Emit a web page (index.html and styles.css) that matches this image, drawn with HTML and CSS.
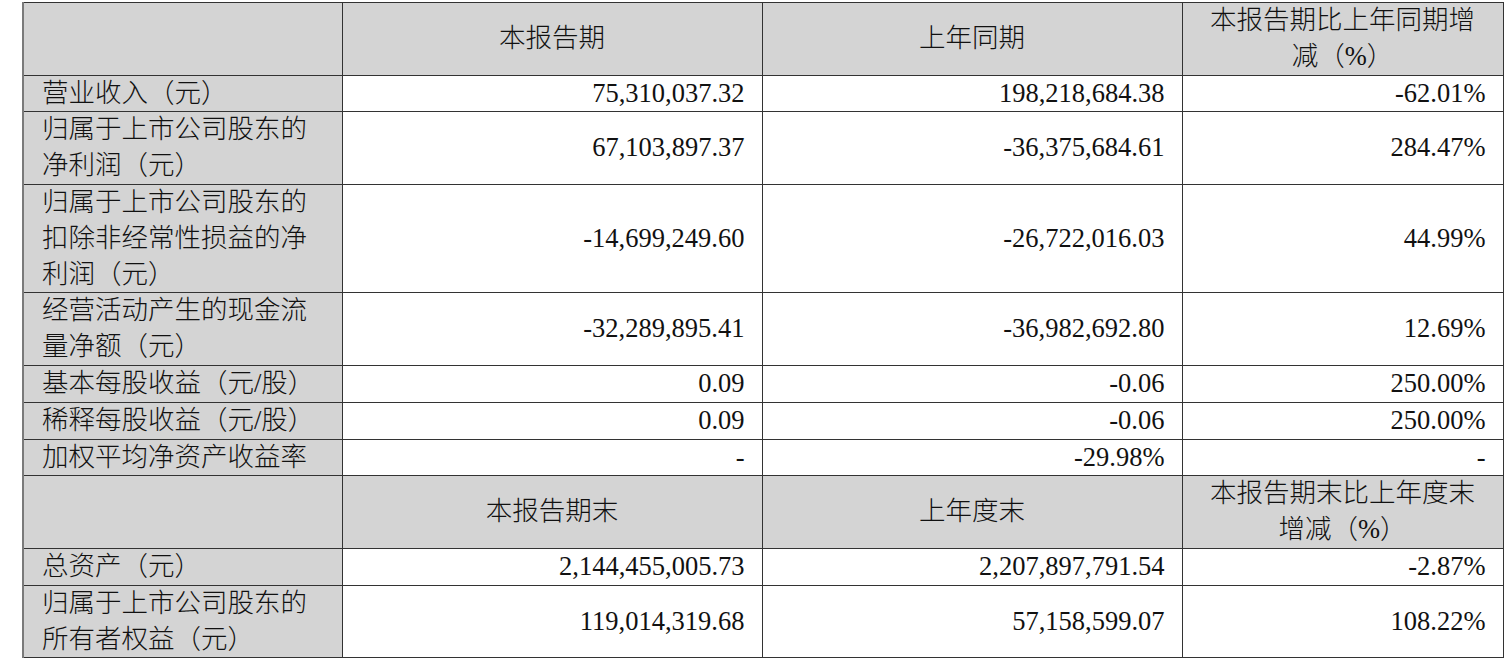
FILE: index.html
```html
<!DOCTYPE html>
<html lang="zh-CN">
<head>
<meta charset="utf-8">
<title>主要会计数据和财务指标</title>
<link rel="stylesheet" href="styles.css">
</head>
<body>
<table class="fin">
  <colgroup>
    <col class="c-label">
    <col class="c-num">
    <col class="c-num">
    <col class="c-pct">
  </colgroup>
  <tbody>
    <tr class="head">
      <td class="label"></td>
      <td>本报告期</td>
      <td>上年同期</td>
      <td>本报告期比上年同期增减（%）</td>
    </tr>
    <tr>
      <td class="label">营业收入（元）</td>
      <td class="num">75,310,037.32</td>
      <td class="num">198,218,684.38</td>
      <td class="num">-62.01%</td>
    </tr>
    <tr>
      <td class="label">归属于上市公司股东的净利润（元）</td>
      <td class="num">67,103,897.37</td>
      <td class="num">-36,375,684.61</td>
      <td class="num">284.47%</td>
    </tr>
    <tr>
      <td class="label">归属于上市公司股东的扣除非经常性损益的净利润（元）</td>
      <td class="num">-14,699,249.60</td>
      <td class="num">-26,722,016.03</td>
      <td class="num">44.99%</td>
    </tr>
    <tr>
      <td class="label">经营活动产生的现金流量净额（元）</td>
      <td class="num">-32,289,895.41</td>
      <td class="num">-36,982,692.80</td>
      <td class="num">12.69%</td>
    </tr>
    <tr>
      <td class="label">基本每股收益（元/股）</td>
      <td class="num">0.09</td>
      <td class="num">-0.06</td>
      <td class="num">250.00%</td>
    </tr>
    <tr>
      <td class="label">稀释每股收益（元/股）</td>
      <td class="num">0.09</td>
      <td class="num">-0.06</td>
      <td class="num">250.00%</td>
    </tr>
    <tr>
      <td class="label">加权平均净资产收益率</td>
      <td class="num">-</td>
      <td class="num">-29.98%</td>
      <td class="num">-</td>
    </tr>
    <tr class="head">
      <td class="label"></td>
      <td>本报告期末</td>
      <td>上年度末</td>
      <td>本报告期末比上年度末增减（%）</td>
    </tr>
    <tr>
      <td class="label">总资产（元）</td>
      <td class="num">2,144,455,005.73</td>
      <td class="num">2,207,897,791.54</td>
      <td class="num">-2.87%</td>
    </tr>
    <tr>
      <td class="label">归属于上市公司股东的所有者权益（元）</td>
      <td class="num">119,014,319.68</td>
      <td class="num">57,158,599.07</td>
      <td class="num">108.22%</td>
    </tr>
  </tbody>
</table>
</body>
</html>
```

FILE: styles.css
```css
html, body {
  margin: 0;
  padding: 0;
  background: #ffffff;
}

body {
  padding: 2px 0 0 22px;
}

.fin {
  border-collapse: collapse;
  table-layout: fixed;
  width: 1480px;
  font-family: "Liberation Serif", "Noto Sans CJK SC", serif;
  font-size: 26.5px;
  line-height: 35.8px;
  color: #111;
  border-left: 2px solid #7a7a7a;
}

.c-label { width: 319px; }
.c-num { width: 420px; }
.c-pct { width: 321px; }

.fin td {
  border: 1px solid #333;
  padding: 0 18px;
  vertical-align: middle;
  word-break: break-all;
}

.fin td.label {
  background: #d4d4d4;
  text-align: left;
  font-weight: 300;
}

.fin tr.head td {
  background: #d4d4d4;
  text-align: center;
  font-weight: 300;
}

.fin td.num {
  text-align: right;
  padding-right: 17px;
}
```
